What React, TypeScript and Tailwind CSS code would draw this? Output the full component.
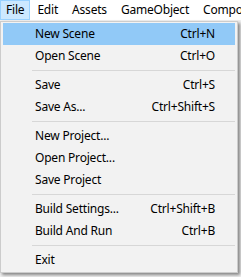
import React from "react";

type Item = { label: string; shortcut?: string; active?: boolean } | { sep: true };

const items: Item[] = [
  { label: "New Scene", shortcut: "Ctrl+N", active: true },
  { label: "Open Scene", shortcut: "Ctrl+O" },
  { sep: true },
  { label: "Save", shortcut: "Ctrl+S" },
  { label: "Save As...", shortcut: "Ctrl+Shift+S" },
  { sep: true },
  { label: "New Project..." },
  { label: "Open Project..." },
  { label: "Save Project" },
  { sep: true },
  { label: "Build Settings...", shortcut: "Ctrl+Shift+B" },
  { label: "Build And Run", shortcut: "Ctrl+B" },
  { sep: true },
  { label: "Exit" },
];

const bar = ["File", "Edit", "Assets", "GameObject", "Component"];

export default function App() {
  return (
    <div
      className="relative w-[241px] h-[277px] overflow-hidden bg-[#f0f0f0] text-black text-[12px] tracking-[-0.2px]"
      style={{ fontFamily: '"Noto Sans", "Open Sans", sans-serif' }}
    >
      <div className="flex h-[20px] bg-white items-stretch whitespace-nowrap">
        {bar.map((b, i) => (
          <div
            key={b}
            className={
              i === 0
                ? "flex items-center px-[5px] w-[31px] bg-[#cce8ff] border border-[#99d1ff]"
                : "flex items-center px-[6px] border border-transparent"
            }
          >
            {b}
          </div>
        ))}
      </div>
      <div className="absolute left-0 top-[21px] w-[238px] border border-[#cccccc] bg-[#f2f2f2] p-[1px] px-[2px] shadow-[2px_2px_3px_rgba(0,0,0,0.45)]">
        {items.map((it, i) =>
          "sep" in it ? (
            <div key={i} className="h-[7px] flex items-center pl-[29px]">
              <div className="h-px w-full bg-[#d7d7d7]" />
            </div>
          ) : (
            <div
              key={i}
              className={
                "h-[22px] flex items-center justify-between pl-[32px] pr-[20px] whitespace-nowrap " +
                (it.active ? "bg-[#91c9f7]" : "")
              }
            >
              <span>{it.label}</span>
              {it.shortcut && <span>{it.shortcut}</span>}
            </div>
          )
        )}
      </div>
    </div>
  );
}
